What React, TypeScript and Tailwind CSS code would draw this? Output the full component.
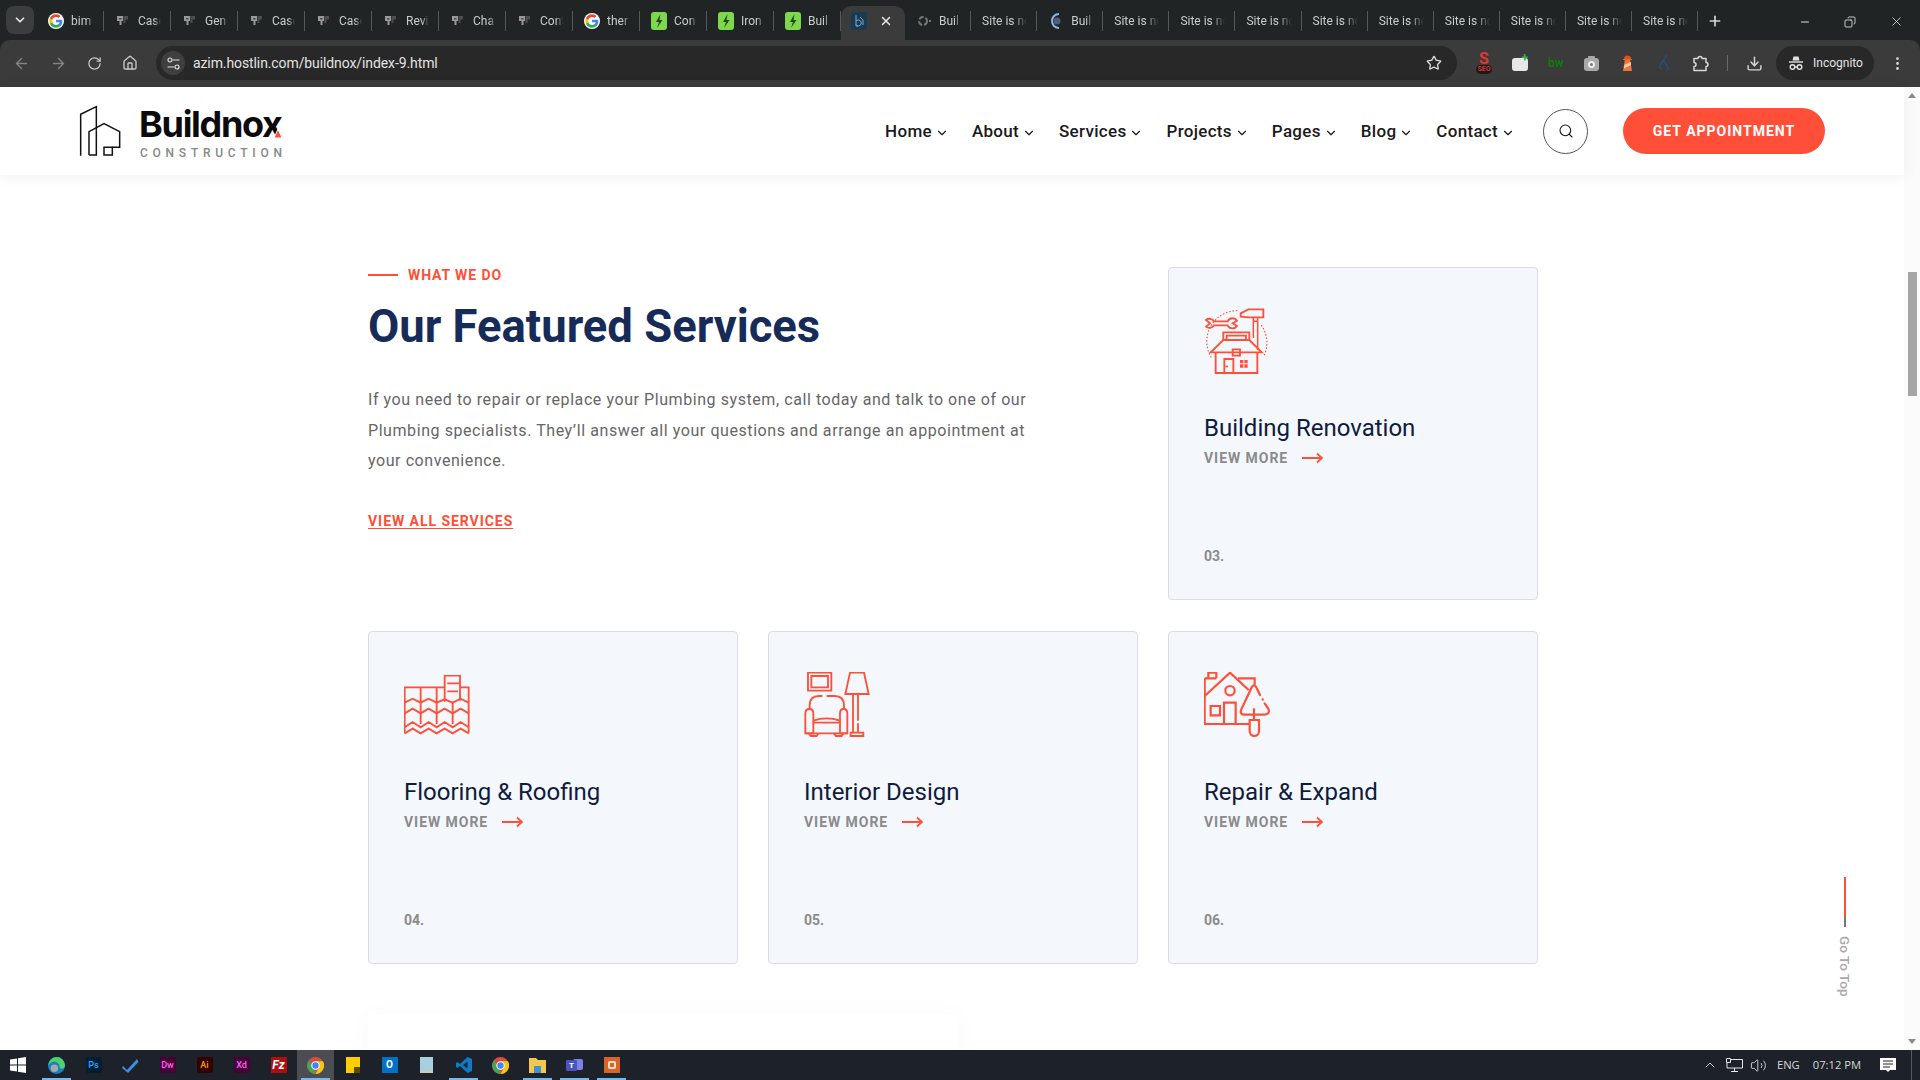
import React from "react";
import { ArrowLeft, ArrowRight, ChevronDown, ChevronUp, Download, Home, Minus, MoreVertical, Plus, RotateCw, Search, Star, Volume2, X, Copy } from "lucide-react";

const Google = ({ s = 16 }: { s?: number }) => (
  <svg width={s} height={s} viewBox="0 0 48 48" className="shrink-0">
    <circle cx="24" cy="24" r="24" fill="#fff" />
    <path fill="#4285F4" d="M43 24.500c0-1.400-.1-2.700-.4-4H24v7.600h10.800c-.5 2.500-1.900 4.600-4 6v5h6.500C41 35.600 43 30.500 43 24.500z" />
    <path fill="#34A853" d="M24 44c5.400 0 9.900-1.800 13.300-4.900l-6.500-5c-1.800 1.200-4.100 1.900-6.800 1.900-5.200 0-9.600-3.500-11.200-8.200H6.100v5.200C9.400 39.500 16.200 44 24 44z" />
    <path fill="#FBBC05" d="M12.800 27.800c-.4-1.200-.6-2.500-.6-3.800s.2-2.600.6-3.800V15H6.100C4.700 17.700 4 20.800 4 24s.7 6.300 2.100 9l6.700-5.200z" />
    <path fill="#EA4335" d="M24 12c2.900 0 5.600 1 7.700 3l5.700-5.700C33.900 6.100 29.400 4 24 4 16.200 4 9.400 8.500 6.100 15l6.700 5.200C14.400 15.500 18.800 12 24 12z" />
  </svg>
);
const GreyFav = () => (
  <svg width={16} height={16} viewBox="0 0 16 16" className="shrink-0">
    <path d="M2 3h6v5H6.500v4H4.500V8H2z" fill="#9a9a9a" />
    <path d="M4 5h2.500v1.500H4z" fill="#4c4c4c" />
    <path d="M8.500 3H13v3.500H10.500V10H8.500z" fill="#4e4e4e" />
  </svg>
);
const GreenFav = () => (
  <svg width={16} height={18} viewBox="0 0 16 18" className="shrink-0">
    <rect width="16" height="18" rx="3" fill="#7ed84b" />
    <path d="M9.500 2 5 10h3l-2 6 5.500-8H8.500z" fill="#24481a" />
  </svg>
);
type TabT = { t: string; k?: "g" | "c" | "l" | "r" | "n" };
const left: TabT[] = [
  { t: "bim", k: "g" }, { t: "Case", k: "c" }, { t: "Gen", k: "c" }, { t: "Case", k: "c" }, { t: "Case", k: "c" }, { t: "Revi", k: "c" },
  { t: "Cha", k: "c" }, { t: "Cont", k: "c" }, { t: "ther", k: "g" }, { t: "Con", k: "l" }, { t: "Iron", k: "l" }, { t: "Buil", k: "l" },
];
const right: TabT[] = [
  { t: "Buil", k: "n" }, { t: "Site is not" }, { t: "Buil", k: "r" }, { t: "Site is not" }, { t: "Site is not" }, { t: "Site is not" },
  { t: "Site is not" }, { t: "Site is not" }, { t: "Site is not" }, { t: "Site is not" }, { t: "Site is not" }, { t: "Site is not" },
];
const Fav = ({ k }: { k?: TabT["k"] }) => {
  if (k === "g") return <Google />;
  if (k === "c") return <GreyFav />;
  if (k === "l") return <GreenFav />;
  if (k === "n") return (
    <svg width={16} height={16} viewBox="0 0 16 16" className="shrink-0"><circle cx="7" cy="8" r="4" fill="none" stroke="#777" strokeWidth="2" strokeDasharray="5 2" /><path d="M13 7h2v2h-2z" fill="#777" /></svg>
  );
  if (k === "r") return (
    <svg width={16} height={18} viewBox="0 0 16 18" className="shrink-0"><path d="M11 2a7 7 0 1 0 0 14" fill="none" stroke="#8fb4e8" strokeWidth="2" /><circle cx="9" cy="9" r="3.500" fill="#4b5f7a" /></svg>
  );
  return null;
};
const Tab = ({ t, k, w }: TabT & { w: string }) => (
  <div className={`${w} h-full shrink-0 flex items-center relative`}>
    <div className={`flex items-center w-full h-[20px] border-r border-[#55585a] pl-[11px] pr-[9px] ${k ? "gap-[7px]" : ""}`}>
      <Fav k={k} />
      <span className="text-[12px] leading-[20px] text-[#c9cbcc] whitespace-nowrap overflow-hidden flex-1 min-w-0 [mask-image:linear-gradient(to_right,black_70%,transparent)]">{t}</span>
    </div>
  </div>
);

const TabStrip = () => (
  <div className="h-[40px] flex items-start shrink-0 relative">
    <div className="mt-[6px] ml-[6px] mr-[3px] w-[28px] h-[28px] rounded-[8px] bg-[#3b3d3e] flex items-center justify-center">
      <ChevronDown size={14} strokeWidth={3} color="#e6e6e6" />
    </div>
    <div className="flex h-[30px] mt-[6px]">
      {left.map((a, i) => <Tab key={i} {...a} w="w-[67px]" />)}
    </div>
    <div className="mt-[6px] w-[64px] h-[34px] bg-[#3b3b3b] rounded-t-[10px] flex items-center pl-[10px] pb-[4px] shrink-0">
      <svg width={16} height={18} viewBox="0 0 16 18"><rect width="16" height="18" rx="2" fill="#173a55" /><path d="M5 3v11h2M5 9a3 3 0 1 1 0 4M9 5l3 3v5" fill="none" stroke="#7fa7c4" strokeWidth="1" /></svg>
      <X size={14} strokeWidth={2.500} color="#e8e8e8" className="ml-[12px]" />
    </div>
    <div className="flex h-[30px] mt-[6px]">
      {right.map((a, i) => <Tab key={i} {...a} w="w-[66.1px]" />)}
    </div>
    <Plus size={16} strokeWidth={2.500} color="#d5d5d5" className="ml-[9px] mt-[13px]" />
    <div className="ml-auto flex items-center mt-[14px] mr-[16px] gap-[33px]">
      <Minus size={12} strokeWidth={2} color="#e2e2e2" />
      <Copy size={12} strokeWidth={1.700} color="#e2e2e2" className="-scale-x-100" />
      <X size={15} strokeWidth={1.300} color="#e2e2e2" />
    </div>
  </div>
);

const Incog = () => (
  <svg width={16} height={16} viewBox="0 0 16 16" fill="none" stroke="#e3e3e3" strokeWidth="1.400">
    <path d="M5.500 1.500h5l1 4h-7z" fill="#e3e3e3" stroke="none" />
    <path d="M1 7h14" />
    <circle cx="4.500" cy="12" r="2.300" />
    <circle cx="11.500" cy="12" r="2.300" />
    <path d="M7 12h2" />
  </svg>
);
const Tune = () => (
  <svg width={13} height={13} viewBox="0 0 13 13" fill="none" stroke="#e3e3e3" strokeWidth="1.200">
    <circle cx="3" cy="3" r="2" /><path d="M6 3h6.500M.5 10H7" /><circle cx="10" cy="10" r="2" />
  </svg>
);
const ExtPuzzle = () => (
  <svg width={17} height={17} viewBox="0 0 17 17" fill="none" stroke="#d8d8d8" strokeWidth="1.500" className="ml-[21px]">
    <path d="M2 3.500H6A2 2 0 0 1 10 3.500H14V7.500A2 2 0 0 1 14 11.500V15.500H2V11.500A2 2 0 0 0 2 7.500Z" strokeLinejoin="round" />
  </svg>
);

const Toolbar = () => (
  <div className="h-[47px] bg-[#3b3b3b] rounded-t-[10px] flex items-start pt-[6px] shrink-0">
    <div className="flex items-center h-[34px] pl-[13px] gap-[20px] w-[156px]">
      <ArrowLeft size={17} color="#828282" />
      <ArrowRight size={17} color="#828282" />
      <RotateCw size={15} color="#c8c8c8" />
      <Home size={16} color="#c8c8c8" />
    </div>
    <div className="w-[1301px] h-[34px] rounded-full bg-[#282828] flex items-center pl-[5px]">
      <div className="w-[24px] h-[24px] rounded-full bg-[#3f3f3f] flex items-center justify-center">
        <Tune />
      </div>
      <span className="ml-[8px] text-[14px] text-[#e3e3e3] tracking-[-0.1px]">azim.hostlin.com/buildnox/index-9.html</span>
      <Star size={16} color="#d8d8d8" className="ml-auto mr-[15px]" />
    </div>
    <div className="flex items-center h-[34px] flex-1 pl-[19px]">
      <div className="w-[16px] h-[22px] flex flex-col items-center">
        <span className="h-[13px] text-[16px] leading-[13px] font-bold text-[#e0392b]">S</span>
        <span className="w-[16px] h-[9px] rounded-full bg-[#1a1a1a] text-[#d33] text-[7px] font-bold leading-[9px] text-center">SEO</span>
      </div>
      <div className="ml-[20px] w-[16px] h-[13px] mt-[2px] rounded-[3px] bg-[#e8e8e8] relative"><span className="absolute -top-[6px] right-0 text-[#2bb34a] text-[12px] font-bold leading-none">+</span></div>
      <span className="ml-[20px] w-[16px] text-[12px] font-bold text-[#0c7a0c] leading-none">bw</span>
      <div className="ml-[20px] w-[15px] h-[13px] mt-[2px] rounded-[3px] bg-[#a8a8a8] relative flex items-center justify-center"><div className="absolute -top-[2px] left-[4px] w-[7px] h-[3px] rounded-t-[1px] bg-[#a8a8a8]" /><div className="w-[7px] h-[7px] rounded-full border-2 border-[#eee] bg-[#777]" /></div>
      <svg width={15} height={18} viewBox="0 0 15 18" className="ml-[21px]"><path d="M5 5h5l2 12H3z" fill="#f0743a" /><path d="M4.200 11l6.500-3 .4 3-7.200 3.500z" fill="#ffc9a6" /><path d="M4 5a3.500 3.500 0 0 1 7 0z" fill="#d9541e" /><path d="M3 5h9v1H3z" fill="#e8622a" /></svg>
      <svg width={14} height={18} viewBox="0 0 14 18" className="ml-[22px]"><path d="M10 1 2 13M7 7l5 8M2 13l3 2M12 15 9 16" stroke="#274d73" strokeWidth="1.600" fill="none" /></svg>
      <ExtPuzzle />
      <div className="ml-[18px] w-px h-[16px] bg-[#6a6a6a]" />
      <Download size={17} color="#d8d8d8" className="ml-[18px]" />
      <div className="ml-[13px] w-[98px] h-[34px] rounded-full bg-[#282828] flex items-center pl-[12px] gap-[9px]">
        <Incog />
        <span className="text-[12px] text-[#e3e3e3]">Incognito</span>
      </div>
      <MoreVertical size={17} color="#d8d8d8" className="ml-[15px]" />
    </div>
  </div>
);

const Logo = () => (
  <div className="flex items-center">
    <svg width={46} height={54} viewBox="55 45 138 162" fill="none" stroke="#111" strokeWidth="4.500" className="shrink-0 ml-[1px]">
      <path d="M63 200V76L110 53V124" />
      <path d="M88 198V128L133 104 180 128V175H158" />
      <path d="M110 124V198H88" />
      <path d="M133 198V175H158V198Z" />
    </svg>
    <div className="ml-[15px] mt-[2px] relative">
      <div className="text-[36px] leading-[38px] font-bold text-[#0b0b0b] [font-family:Inter,sans-serif] tracking-[-1.300px]">Buildnox</div>
      <svg width={10} height={11} viewBox="0 0 10 11" className="absolute left-[134px] top-[23px]"><path d="M5 1 9 10H1z" fill="#ff4f38" stroke="#fff" strokeWidth="1" /></svg>
      <div className="text-[12px] leading-[14px] font-medium text-[#888] tracking-[4.750px] mt-[3px] ml-[1px] whitespace-nowrap">CONSTRUCTION</div>
    </div>
  </div>
);

const nav = ["Home", "About", "Services", "Projects", "Pages", "Blog", "Contact"];
const Header = () => (
  <header className="h-[88px] shrink-0 bg-white flex items-center pl-[77px] shadow-[0_2px_14px_rgba(0,0,0,0.06)] relative z-10">
    <Logo />
    <nav className="flex items-center ml-auto gap-[23px] mt-[2px]">
      {nav.map((n) => (
        <div key={n} className="flex items-center gap-[3px] text-[17px] font-medium tracking-[0.3px] text-[#1a1a1a]">
          {n}<ChevronDown size={14} strokeWidth={2} className="mt-[2px]" />
        </div>
      ))}
    </nav>
    <div className="ml-[28px] w-[45px] h-[45px] rounded-full border border-[#555] flex items-center justify-center">
      <Search size={16} strokeWidth={1.600} color="#111" />
    </div>
    <div className="ml-[35px] mr-[79px] w-[202px] h-[46px] rounded-full bg-[#ff4f38] flex items-center justify-center text-[14px] font-bold tracking-[1px] text-white">GET APPOINTMENT</div>
  </header>
);

const Arrow = () => (
  <svg width={21} height={12} viewBox="0 0 21 12" fill="none" stroke="#ff4f38" strokeWidth="1.800" className="ml-[14px]">
    <path d="M0 6h20M15 1.500 20 6l-5 4.500" />
  </svg>
);

const red = { stroke: "#ff4f38", fill: "none", strokeWidth: 5.5 } as const;

const IconRenovation = () => (
  <svg width={67} height={68} viewBox="72 82 201 204" {...red}>
    <path d="M182 98 205 86H250V110H205L182 108Z" />
    <path d="M220 110V172M233 110V208M220 122H233" strokeWidth="4.500" />
    <path d="M78 118a16 16 0 0 1 24 4H143a16 16 0 0 1 28-2L158 128 171 136a16 16 0 0 1-28-2H102a16 16 0 0 1-24 4L90 128Z" />
    <path d="M170 90A92 92 0 0 0 95 232" strokeDasharray="1 9" strokeLinecap="round" strokeWidth="4" />
    <path d="M245 135A92 92 0 0 1 252 225" strokeDasharray="1 9" strokeLinecap="round" strokeWidth="4" />
    <path d="M130 178V155H208V178M140 178V165H198V178" />
    <path d="M92 215 130 178H208L245 215Z" />
    <path d="M158 206H180V225H158Z" />
    <path d="M107 215V277H232V215M133 277V235H160V277M137 257H144" />
    <path d="M180 238H190V248H180ZM193 238H203V248H193ZM180 251H190V261H180ZM193 251H203V261H193Z" fill="#ff4f38" stroke="none" />
  </svg>
);
const IconFlooring = () => (
  <svg width={66} height={60} viewBox="70 75 198 180" {...red} className="mt-[3px]">
    <path d="M192 112V77H238V112M192 112V155M238 112V152M200 100H238M200 124H232" />
    <path d="M192 112H72V250M238 112H264V250" />
    <path d="M120 112V222M168 112V222M216 155V222" />
    <path d="M72 158 96 146 120 158 144 146 168 158 192 148 216 158 240 146 264 158" />
    <path d="M72 190 96 176 120 190 144 176 168 190 192 176 216 190 240 176 264 190" />
    <path d="M72 232 96 216 120 232 144 216 168 232 192 216 216 232 240 216 264 232" />
    <path d="M72 250 96 236 120 250 144 236 168 250 192 236 216 250 240 236 264 250" />
  </svg>
);
const IconInterior = () => (
  <svg width={66} height={66} viewBox="1270 66 198 198" {...red}>
    <path d="M1282 68H1352V122H1282Z" />
    <path d="M1292 78H1342V112H1292Z" />
    <path d="M1408 68H1450L1464 132H1394Z" />
    <path d="M1417 132V248M1432 132V212M1432 220V248" />
    <path d="M1410 258V248H1448V258Z" />
    <path d="M1287 178V166Q1287 138 1315 138H1325M1338 138H1362Q1390 138 1390 166V178" />
    <path d="M1274 250V190Q1274 177 1286 177 1298 177 1298 190V250ZM1378 250V190Q1378 177 1389 177 1400 177 1400 190V250Z" />
    <path d="M1274 250H1400M1298 212Q1338 198 1378 212M1298 218H1378" />
    <path d="M1285 250 1290 258H1308L1313 250M1360 250 1365 258H1383L1388 250" />
  </svg>
);
const IconRepair = () => (
  <svg width={66} height={66} viewBox="70 66 198 198" {...red} strokeWidth="6.500">
    <path d="M83 85V68H107V85M72 85H107M172 85H222V104" />
    <path d="M72 138 148 68 204 120" />
    <path d="M72 85V222H206" />
    <circle cx="148" cy="122" r="14" />
    <path d="M130 222V158H165V222" />
    <path d="M90 168H118V196H90Z" />
    <path d="M238 135 226 110Q220 102 214 110L182 178Q176 194 192 194H250Q268 194 264 178L252 160" strokeLinecap="round" />
    <path d="M246 148V149" strokeLinecap="round" />
    <path d="M220 175V210" />
    <path d="M207 210H235V244A14 14 0 0 1 207 244Z" />
  </svg>
);

const Card = ({ title, num, icon }: { title: string; num: string; icon: React.ReactNode }) => (
  <div className="h-[333px] bg-[#f4f7fb] border border-[#d9dde3] rounded-[4px] pl-[35px] pt-[40px]">
    <div className="h-[68px] flex items-start">{icon}</div>
    <div className="mt-[37px] text-[24px] leading-[30px] text-[#0f1b3d]">{title}</div>
    <div className="mt-[5px] h-[20px] flex items-center">
      <span className="text-[14px] leading-[20px] font-bold tracking-[0.950px] text-[#8b8b8b]">VIEW MORE</span>
      <Arrow />
    </div>
    <div className="mt-[78px] text-[14px] leading-[20px] font-bold text-[#8b8b8b]">{num}</div>
  </div>
);

const Main = () => (
  <main className="flex-1 min-h-0 overflow-hidden bg-white pl-[368px] pt-[92px]">
    <div className="w-[1170px] grid grid-cols-3 gap-x-[30px] gap-y-[31px]">
      <div className="col-span-2">
        <div className="flex items-center h-[16px]">
          <div className="w-[30px] h-[2px] bg-[#ff4f38]" />
          <span className="ml-[10px] text-[14px] font-bold tracking-[0.900px] text-[#ff4f38]">WHAT WE DO</span>
        </div>
        <h1 className="mt-[16px] text-[45.400px] leading-[56px] font-bold text-[#172b58]">Our Featured Services</h1>
        <p className="mt-[30px] w-[668px] text-[16px] leading-[30.500px] tracking-[0.570px] text-[#666]">
          If you need to repair or replace your Plumbing system, call today and talk to one of our Plumbing specialists. They’ll answer all your questions and arrange an appointment at your convenience.
        </p>
        <div className="mt-[35px] text-[14px] leading-[18px] font-bold tracking-[0.950px] text-[#ff4f38] underline underline-offset-2">VIEW ALL SERVICES</div>
      </div>
      <Card title="Building Renovation" num="03." icon={<IconRenovation />} />
      <Card title="Flooring & Roofing" num="04." icon={<IconFlooring />} />
      <Card title="Interior Design" num="05." icon={<IconInterior />} />
      <Card title="Repair & Expand" num="06." icon={<IconRepair />} />
    </div>
    <div className="mt-[50px] w-[590px] h-[80px] rounded-[4px] shadow-[0_0_30px_rgba(0,0,0,0.025)]" />
  </main>
);

const Scrollbar = () => (
  <div className="w-[16px] shrink-0 bg-[#fbfbfb] flex flex-col items-center pt-[6px] pb-[6px]">
    <div className="w-0 h-0 border-x-[4px] border-x-transparent border-b-[5px] border-b-[#8a8a8a]" />
    <div className="mt-[174px] w-[9px] h-[124px] bg-[#a5a5a5]" />
    <div className="mt-auto w-0 h-0 border-x-[4px] border-x-transparent border-t-[5px] border-t-[#8a8a8a]" />
  </div>
);

const Task = ({ children, on, active }: { children: React.ReactNode; on?: boolean; active?: boolean }) => (
  <div className={`w-[37px] h-full relative flex items-center justify-center shrink-0 ${active ? "bg-[#4a4d52]" : ""}`}>
    {children}
    {on && <div className="absolute bottom-0 left-[4px] right-[4px] h-[2px] bg-[#76b9ed]" />}
  </div>
);
const Adobe = ({ t, bg, c }: { t: string; bg: string; c: string }) => (
  <div className={`w-[16px] h-[16px] rounded-[2px] flex items-center justify-center text-[9px] font-medium leading-none ${bg} ${c}`}>{t}</div>
);
const Chrome = () => (
  <svg width={17} height={17} viewBox="0 0 16 16"><circle cx="8" cy="8" r="8" fill="#dd4b3e" /><path d="M8 16a8 8 0 0 1-6-13l4 7z" fill="#3fa757" /><path d="M8 4h7a8 8 0 0 1-7 12l3-6z" fill="#f5c518" /><circle cx="8" cy="8" r="3.500" fill="#4285f4" stroke="#fff" strokeWidth="1" /></svg>
);

const Taskbar = () => (
  <div className="h-[30px] bg-[#1d2129] flex items-center shrink-0">
    <div className="w-[38px] h-full flex items-center justify-center pr-[2px]">
      <svg width={16} height={16} viewBox="0 0 16 16" fill="#fff"><path d="M0 2.500 7 1.500V7.500H0ZM8 1.300 16 0V7.500H8ZM0 8.500H7V14.500L0 13.500ZM8 8.500H16V16L8 14.700Z" /></svg>
    </div>
    <Task on><svg width={17} height={17} viewBox="0 0 16 16"><circle cx="8" cy="8" r="8" fill="#1681c4" /><path d="M8 0a8 8 0 0 1 8 8c0 2-1.500 3-3 3-1 0-2-.5-2-1.500C11 6 8 4 5 4.500 3 5 1 6.500 .2 8.500.5 4 4 0 8 0z" fill="#4fd06a" /><circle cx="6" cy="10.500" r="3.500" fill="#a8a8a8" /></svg></Task>
    <Task><Adobe t="Ps" bg="bg-[#001e36]" c="text-[#31a8ff]" /></Task>
    <Task><svg width={17} height={15} viewBox="0 0 17 15"><path d="M1 8 5 12 15 1 16.500 4 6 15 0 10z" fill="#3a8ee6" /></svg></Task>
    <Task><Adobe t="Dw" bg="bg-[#470137]" c="text-[#ff61f6]" /></Task>
    <Task><Adobe t="Ai" bg="bg-[#330000]" c="text-[#ff9a00]" /></Task>
    <Task><Adobe t="Xd" bg="bg-[#470137]" c="text-[#ff61f6]" /></Task>
    <Task><div className="w-[16px] h-[16px] bg-[#b00d0d] text-white text-[12px] italic font-bold flex items-center justify-center leading-none">Fz</div></Task>
    <Task on active><Chrome /></Task>
    <Task><div className="w-[14px] h-[16px] bg-[#ffcd00] relative"><div className="absolute right-0 bottom-0 w-[6px] h-[6px] bg-[#5f4b00]" /></div></Task>
    <Task><div className="w-[16px] h-[16px] bg-[#0072c6] flex items-center justify-center text-white text-[10px] font-bold leading-none">O</div></Task>
    <Task><div className="w-[13px] h-[16px] bg-[#a8cfe0] border-b-2 border-[#d9c9a0]" /></Task>
    <Task on><svg width={16} height={16} viewBox="0 0 16 16"><path d="M11.500 0 16 2v12l-4.500 2L4 9l-2.500 2L0 10V6l1.500-1L4 7zM11.500 4.500 7 8l4.500 3.500z" fill="#0a7cc8" /></svg></Task>
    <Task><Chrome /></Task>
    <Task on><svg width={17} height={15} viewBox="0 0 17 15"><path d="M0 0h7l2 2h8v13H0z" fill="#f2c94c" /><path d="M5 8h7v7H5z" fill="#3f92d4" /></svg></Task>
    <Task on><div className="relative w-[17px] h-[16px]"><div className="absolute right-0 top-[2px] w-[10px] h-[11px] rounded-[2px] bg-[#7b83eb]" /><div className="absolute left-0 top-[3px] w-[11px] h-[11px] bg-[#4b53bc] rounded-[1px] flex items-center justify-center text-white text-[8px] font-bold leading-none">T</div></div></Task>
    <Task on><div className="w-[16px] h-[16px] bg-[#d9642a] flex items-center justify-center"><div className="w-[8px] h-[8px] rounded-[2px] border-2 border-[#f8e0c8]" /></div></Task>
    <div className="ml-auto flex items-center text-[#d8d8d8] text-[12px] h-full">
      <ChevronUp size={16} strokeWidth={1.300} color="#e6e6e6" />
      <svg width={17} height={14} viewBox="0 0 17 14" fill="none" stroke="#e6e6e6" strokeWidth="1" className="ml-[8px]"><path d="M4 1.500H16.500V10H1V5M8.500 10V13M5 13.500H12M.5.500H4.500V4.500H.5Z" /></svg>
      <Volume2 size={17} strokeWidth={1.200} color="#e6e6e6" className="ml-[7px]" />
      <span className="ml-[10px] [font-family:'Open_Sans',sans-serif] text-[11.200px]">ENG</span>
      <span className="ml-[13px] [font-family:'Open_Sans',sans-serif] text-[11.200px]">07:12 PM</span>
      <svg width={16} height={15} viewBox="0 0 16 15" className="ml-[19px]"><path d="M0 0H16V12H10L8 14 6 12H0Z" fill="#fff" /><path d="M3 3H13M3 6H13M3 9H10" stroke="#1d2129" strokeWidth="1" /></svg>
      <div className="ml-[15px] w-px h-full bg-[#555a60]" />
      <div className="w-[8px]" />
    </div>
  </div>
);

export default function App() {
  return (
    <div className="w-[1920px] h-[1080px] overflow-hidden flex flex-col relative bg-[#212425] [font-family:Roboto,sans-serif]">
      <TabStrip />
      <Toolbar />
      <div className="flex-1 min-h-0 flex">
        <div className="flex-1 min-w-0 flex flex-col">
          <Header />
          <Main />
        </div>
        <Scrollbar />
      </div>
      <Taskbar />
      <div className="absolute left-[1844px] top-[877px] flex flex-col items-center w-[2px]">
        <div className="w-[2px] h-[40px] bg-[#ff4f38] shrink-0" />
        <div className="w-[2px] h-[10px] bg-[#777] shrink-0" />
        <div className="mt-[9px] [writing-mode:vertical-rl] text-[13.500px] font-medium text-[#a9a9a9] whitespace-nowrap">Go To Top</div>
      </div>
    </div>
  );
}
